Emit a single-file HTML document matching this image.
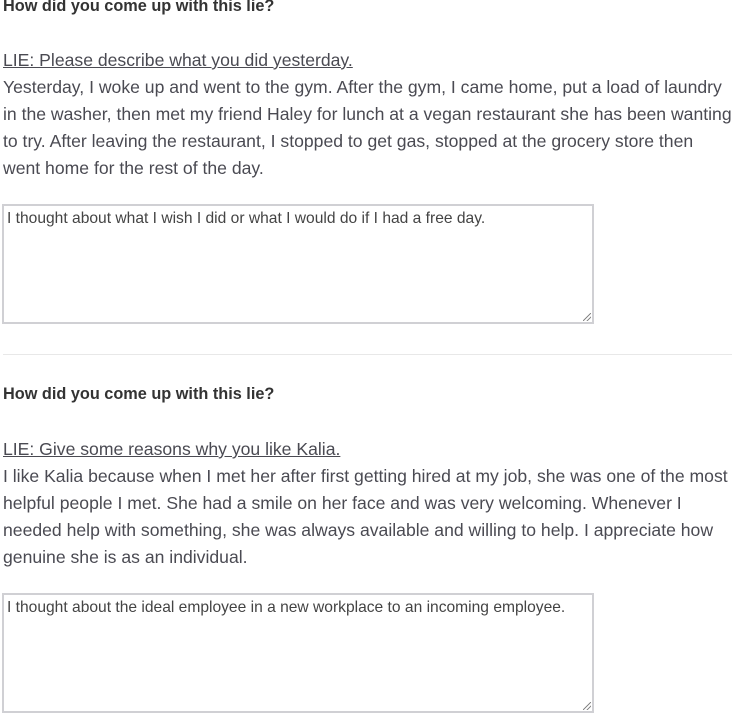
<!DOCTYPE html>
<html><head><style>
body{margin:0;width:752px;height:714px;background:#fff;font-family:"Liberation Sans",sans-serif;color:#3d3d45;position:relative;overflow:hidden}
.h{position:absolute;left:3px;font-weight:bold;font-size:16.3px;color:#333;white-space:nowrap}
.p{position:absolute;left:3px;width:745px;font-size:17.6px;line-height:27px;color:#4a4a52;white-space:nowrap}
.p u{text-decoration:underline}
.ta{position:absolute;left:2px;width:588px;height:116px;border:2px solid #d0d0d4;box-sizing:content-box;font-size:15.6px;color:#444;padding:0}
.ta span{position:absolute;left:3px;top:4px;white-space:nowrap}
.ta i{position:absolute;right:1px;bottom:1px;width:8px;height:8px;background:linear-gradient(135deg,transparent 45%,#888 46%,#888 54%,transparent 55%,transparent 70%,#888 71%,#888 78%,transparent 79%)}
hr{position:absolute;left:3px;top:354px;width:729px;margin:0;border:0;border-top:1px solid #e8e8e8}
</style></head><body>
<div class="h" style="top:-3px">How did you come up with this lie?</div>
<div class="p" style="top:47px"><u>LIE: Please describe what you did yesterday.</u><br>Yesterday, I woke up and went to the gym. After the gym, I came home, put a load of laundry<br>in the washer, then met my friend Haley for lunch at a vegan restaurant she has been wanting<br>to try. After leaving the restaurant, I stopped to get gas, stopped at the grocery store then<br>went home for the rest of the day.</div>
<div class="ta" style="top:204px"><span>I thought about what I wish I did or what I would do if I had a free day.</span><i></i></div>
<hr>
<div class="h" style="top:385px">How did you come up with this lie?</div>
<div class="p" style="top:436px"><u>LIE: Give some reasons why you like Kalia.</u><br>I like Kalia because when I met her after first getting hired at my job, she was one of the most<br>helpful people I met. She had a smile on her face and was very welcoming. Whenever I<br>needed help with something, she was always available and willing to help. I appreciate how<br>genuine she is as an individual.</div>
<div class="ta" style="top:593px"><span>I thought about the ideal employee in a new workplace to an incoming employee.</span><i></i></div>
</body></html>
